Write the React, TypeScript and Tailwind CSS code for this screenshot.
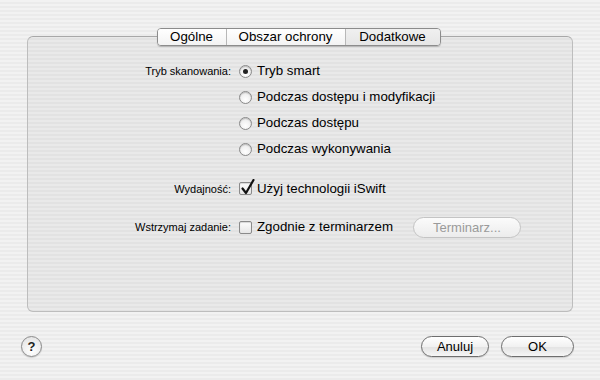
import type { ReactNode } from "react";

const font = "font-['Liberation_Sans','DejaVu_Sans',sans-serif]";

function Radio({ checked, label }: { checked?: boolean; label: string }) {
  return (
    <div className="flex items-center gap-[5px] h-[26px]">
      <span className="w-[13px] h-[13px] rounded-full border border-[#8a8a8a] bg-[radial-gradient(circle_at_50%_70%,#ffffff,#e4e4e4)] shadow-[inset_0_1px_1px_rgba(0,0,0,0.2)] flex items-center justify-center">
        {checked && <span className="w-[5px] h-[5px] rounded-full bg-[#222]" />}
      </span>
      <span className="text-[13.3px] text-black">{label}</span>
    </div>
  );
}

function Checkbox({ checked, label }: { checked?: boolean; label: string }) {
  return (
    <div className="flex items-center gap-[5px]">
      <span className="relative w-[13px] h-[13px] rounded-[2px] border border-[#8a8a8a] bg-[linear-gradient(#fdfdfd,#e6e6e6)] shadow-[inset_0_1px_1px_rgba(0,0,0,0.15)]">
        {checked && (
          <svg className="absolute left-[1px] -top-[4px]" width="14" height="16" viewBox="0 0 14 16">
            <path d="M1.5 9.5 L5 14 L12.5 1" fill="none" stroke="#111" strokeWidth="2.2" strokeLinecap="round" strokeLinejoin="round" />
          </svg>
        )}
      </span>
      <span className="text-[13.3px] text-black">{label}</span>
    </div>
  );
}

function PillButton({ children, className, disabled }: { children: ReactNode; className: string; disabled?: boolean }) {
  return (
    <button
      className={
        "h-[21px] rounded-full text-[13px] flex items-center justify-center " +
        (disabled
          ? "border border-[#c4c4c4] bg-[linear-gradient(#fbfbfb,#ececec)] text-[#9a9a9a]"
          : "border border-[#6e6e6e] bg-[linear-gradient(#ffffff,#f1f1f1_50%,#e2e2e2_51%,#f6f6f6)] text-black shadow-[0_1px_1px_rgba(0,0,0,0.15)]") +
        " " +
        className
      }
    >
      {children}
    </button>
  );
}

function Label({ children }: { children: ReactNode }) {
  return <span className="text-[11px] text-black text-right">{children}</span>;
}

export default function App() {
  return (
    <div
      className={
        "w-[600px] h-[380px] flex flex-col bg-[repeating-linear-gradient(#f2f2f2_0px,#f2f2f2_2px,#ebebeb_2px,#ebebeb_4px)] " +
        font
      }
    >
      <div className="flex justify-center pt-[28px] pr-[3px] relative z-10">
        <div className="flex h-[18px] rounded-[4px] border border-[#8c8c8c] shadow-[0_1px_1px_rgba(0,0,0,0.2)] overflow-hidden text-[13.3px] text-black">
          <span className="w-[69px] flex items-center justify-center bg-[linear-gradient(#ffffff,#f3f3f3)] border-r border-[#b8b8b8]">Ogólne</span>
          <span className="w-[119px] flex items-center justify-center bg-[linear-gradient(#ffffff,#f3f3f3)] border-r border-[#b8b8b8]">Obszar ochrony</span>
          <span className="w-[94px] flex items-center justify-center bg-[linear-gradient(#f0f0f0,#e6e6e6)]">Dodatkowe</span>
        </div>
      </div>

      <div className="mx-[27px] -mt-[10px] h-[276px] rounded-[6px] border border-[#bdbdbd] border-t-[#a8a8a8] bg-[rgba(0,0,0,0.035)] pt-[21px]">
        <div className="grid grid-cols-[203px_1fr] gap-x-[8px] items-center">
          <Label>Tryb skanowania:</Label>
          <Radio checked label="Tryb smart" />
          <span />
          <Radio label="Podczas dostępu i modyfikacji" />
          <span />
          <Radio label="Podczas dostępu" />
          <span />
          <Radio label="Podczas wykonywania" />

          <div className="col-span-2 h-[17px]" />

          <Label>Wydajność:</Label>
          <Checkbox checked label="Użyj technologii iSwift" />

          <div className="col-span-2 h-[18px]" />

          <Label>Wstrzymaj zadanie:</Label>
          <div className="flex items-center">
            <Checkbox label="Zgodnie z terminarzem" />
            <PillButton disabled className="ml-[20px] w-[108px] h-[20px]">
              Terminarz...
            </PillButton>
          </div>
        </div>
      </div>

      <div className="flex items-center px-[21px] mt-[24px]">
        <span className="w-[21px] h-[21px] rounded-full border border-[#8a8a8a] bg-[radial-gradient(circle_at_50%_75%,#ffffff,#e0e0e0)] shadow-[0_1px_1px_rgba(0,0,0,0.15)] flex items-center justify-center text-[13px] font-bold text-[#222]">
          ?
        </span>
        <div className="ml-auto flex gap-[12px] pr-[5px]">
          <PillButton className="w-[68px]">Anuluj</PillButton>
          <PillButton className="w-[73px]">OK</PillButton>
        </div>
      </div>
    </div>
  );
}
